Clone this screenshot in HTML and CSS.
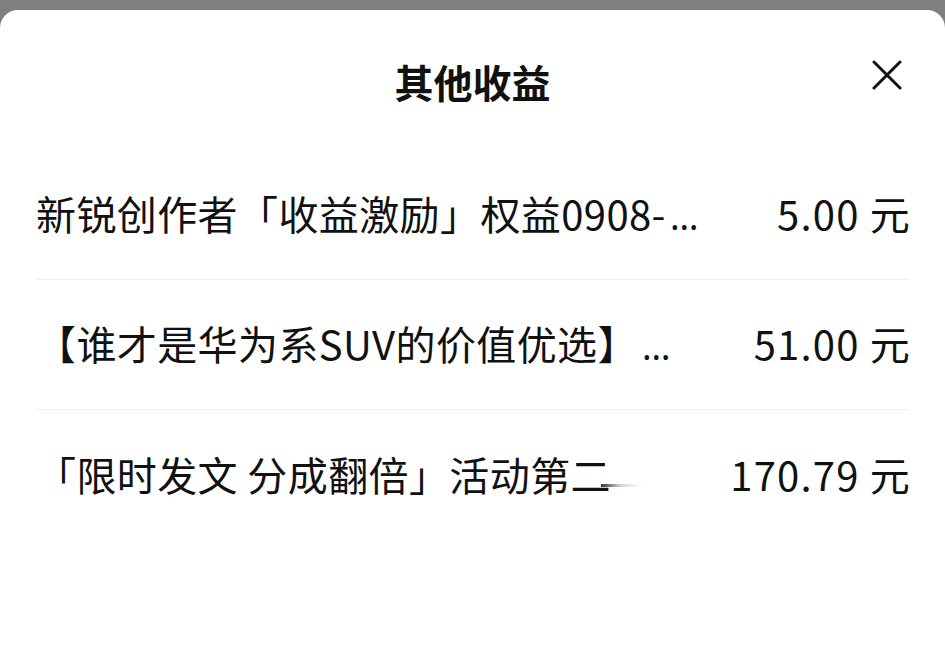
FILE: index.html
```html
<!DOCTYPE html>
<html lang="zh-CN">
<head>
<meta charset="utf-8">
<title>其他收益</title>
<link rel="stylesheet" href="styles.css">
</head>
<body>
<div class="sheet">
  <header class="head">
    <div class="spacer"></div>
    <h1 class="title">其他收益</h1>
    <button class="close" aria-label="关闭">
      <svg viewBox="0 0 30 30" width="30" height="30"><path d="M2 2 L28 28 M28 2 L2 28" stroke="#111" stroke-width="3" stroke-linecap="round" fill="none"/></svg>
    </button>
  </header>
  <ul class="list">
    <li class="row"><span class="name">新锐创作者「收益激励」权益0908-<span class="dots">…</span></span><span class="amount">5.00 元</span></li>
    <li class="row"><span class="name">【谁才是华为系SUV的价值优选】<span class="dots">…</span></span><span class="amount">51.00 元</span></li>
    <li class="row"><span class="name">「限时发文 分成翻倍」活动第二<span class="fade"></span></span><span class="amount">170.79 元</span></li>
  </ul>
</div>
</body>
</html>
```
FILE: styles.css
```css
html, body {
  margin: 0;
  padding: 0;
  height: 100%;
}
body {
  background: #7f7f7f;
  font-family: "Noto Sans CJK SC", "Noto Sans", sans-serif;
  color: #111;
  overflow: hidden;
}
.sheet {
  margin-top: 10px;
  background: #fff;
  border-radius: 18px 18px 0 0;
  height: calc(100% - 10px);
  padding: 0 36px;
  box-sizing: border-box;
}
.head {
  height: 140px;
  display: grid;
  grid-template-columns: 1fr auto 1fr;
}
.title {
  margin: 47px 0 0;
  font-size: 39px;
  line-height: 48px;
  font-weight: 700;
  align-self: start;
}
.close {
  justify-self: end;
  align-self: start;
  margin-top: 43px;
  width: 44px;
  height: 44px;
  border: 0;
  padding: 0;
  background: transparent;
  display: flex;
  align-items: center;
  justify-content: center;
}
.list {
  list-style: none;
  margin: 0;
  padding: 0;
}
.row {
  height: 130px;
  border-bottom: 1px solid #efefef;
  display: flex;
  align-items: center;
  justify-content: space-between;
  font-size: 40px;
  font-weight: 400;
  letter-spacing: 0.4px;
  white-space: nowrap;
  padding-bottom: 3px;
  box-sizing: border-box;
}
.row:last-child {
  border-bottom: 0;
}
.dots {
  font-family: "Noto Sans", "DejaVu Sans", sans-serif;
  font-size: 36px;
  margin-left: 4px;
}
.fade {
  display: inline-block;
  width: 42px;
  height: 3px;
  margin-left: -10px;
  vertical-align: 4px;
  background: linear-gradient(to right, #333, rgba(190,190,190,0.7) 45%, rgba(230,230,230,0.3) 85%, rgba(255,255,255,0));
}
.amount {
  letter-spacing: 1.2px;
  margin-right: -2px;
}
```
